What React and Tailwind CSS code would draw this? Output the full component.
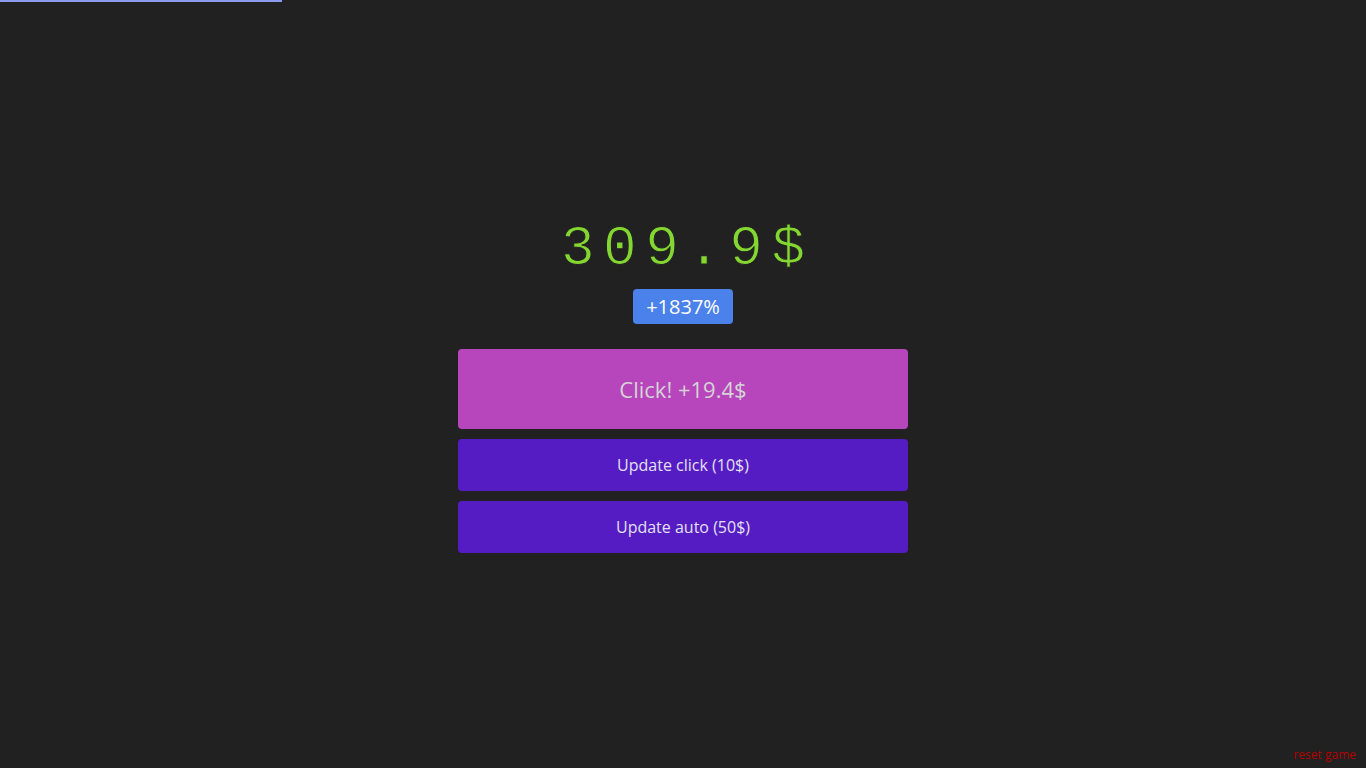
import React, { useState } from 'react';

export default function App() {
  const [money] = useState(309.9);

  return (
    <div className="relative min-h-screen bg-[#212121] flex flex-col items-center justify-center" style={{ fontFamily: '"Open Sans", "Noto Sans", sans-serif' }}>
      {/* progress to next goal */}
      <div className="absolute top-0 left-0 h-[2px] w-[282px] bg-[#8c9bef]" />

      <div className="flex flex-col items-center w-[450px]">
        <div
          className="text-[56px] leading-[68px] tracking-[8.5px] pl-[8.5px] text-[#84d631] [-webkit-text-stroke:1px_#212121]"
          style={{ fontFamily: '"Liberation Mono", monospace' }}
        >
          {money}$
        </div>
        <div className="mt-[6px] h-[35px] px-[13px] flex items-center rounded bg-[#4a81ea] text-white text-[20px]">
          +1837%
        </div>
        <button className="mt-[25px] w-full h-[80px] rounded bg-[#b745bc] text-[#d4d4d4] text-[22px]">
          Click! +19.4$
        </button>
        <button className="mt-[10px] w-full h-[52px] rounded bg-[#561cc3] text-[#e2e0f2] text-[16px]">
          Update click (10$)
        </button>
        <button className="mt-[10px] w-full h-[52px] rounded bg-[#561cc3] text-[#e2e0f2] text-[16px]">
          Update auto (50$)
        </button>
      </div>

      <button className="absolute right-[10px] bottom-[4px] text-[12px] text-[#b30000]">
        reset game
      </button>
    </div>
  );
}
